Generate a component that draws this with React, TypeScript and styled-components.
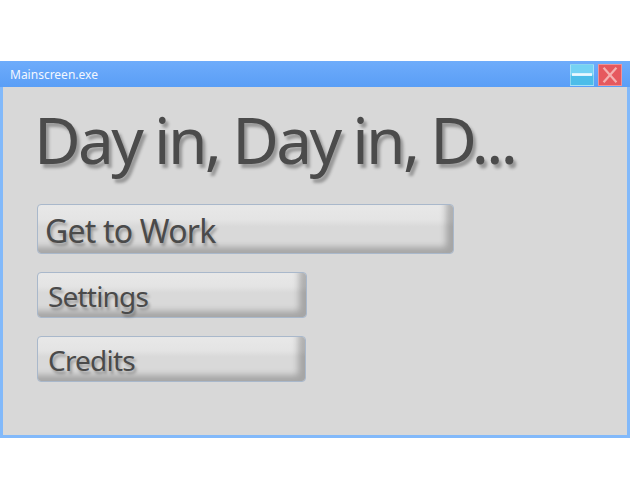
import React from "react"
import styled, { createGlobalStyle } from "styled-components"

const GlobalStyle = createGlobalStyle`
  html, body {
    margin: 0;
    padding: 0;
    background: #ffffff;
    font-family: "Noto Sans", "Open Sans", sans-serif;
  }
`

type MenuItem = {
  label: string
  big?: boolean
  width: number
}

const items: MenuItem[] = [
  { label: "Get to Work", big: true, width: 417 },
  { label: "Settings", width: 270 },
  { label: "Credits", width: 269 },
]

function App() {
  return (
    <>
      <GlobalStyle />
      <Page>
        <Window>
          <TitleBar>
            <Title>Mainscreen.exe</Title>
            <Controls>
              <MinimizeButton aria-label="minimize">
                <svg width="24" height="22" viewBox="0 0 24 22">
                  <rect x="1" y="9" width="22" height="3" fill="#eaf8ff" />
                </svg>
              </MinimizeButton>
              <CloseButton aria-label="close">
                <svg width="24" height="22" viewBox="0 0 24 22">
                  <path
                    d="M5 3 L19 19 M19 3 L5 19"
                    stroke="#f4b0b0"
                    strokeWidth="2.4"
                    fill="none"
                  />
                </svg>
              </CloseButton>
            </Controls>
          </TitleBar>

          <Body>
            <Heading>Day in, Day in, D...</Heading>
            <Menu>
              {items.map((item) => (
                <MenuButton key={item.label} $big={item.big} $width={item.width}>
                  {item.label}
                </MenuButton>
              ))}
            </Menu>
          </Body>
        </Window>
      </Page>
    </>
  )
}

export default App

const Page = styled.div`
  width: 630px;
  height: 500px;
  padding-top: 61px;
  box-sizing: border-box;
`

const Window = styled.div`
  width: 630px;
  height: 377px;
  box-sizing: border-box;
  border: 3px solid #82b9fa;
  border-top: none;
  background: #d8d8d8;
  display: flex;
  flex-direction: column;
`

const TitleBar = styled.div`
  height: 26px;
  margin: 0 -3px;
  padding: 0 8px 0 10px;
  background: linear-gradient(#6eacfb, #5a9ef6);
  display: flex;
  align-items: center;
  justify-content: space-between;
`

const Title = styled.span`
  color: #f2f7ff;
  font-size: 12px;
  padding-top: 1px;
`

const Controls = styled.div`
  display: flex;
  gap: 4px;
  padding-top: 2px;
`

const WindowButton = styled.button`
  width: 24px;
  height: 22px;
  padding: 0;
  border: 1px solid rgba(255, 255, 255, 0.35);
  display: flex;
  align-items: center;
  justify-content: center;
  svg {
    display: block;
  }
`

const MinimizeButton = styled(WindowButton)`
  background: linear-gradient(#74d2f4 0%, #74d2f4 45%, #4cbde9 55%, #4cbde9 100%);
`

const CloseButton = styled(WindowButton)`
  background: #e6585e;
`

const Body = styled.div`
  flex: 1;
  padding: 17px 0 0 34px;
`

const Heading = styled.h1`
  margin: 0 0 0 -3px;
  font-size: 64px;
  font-weight: 400;
  line-height: 72px;
  letter-spacing: -2.7px;
  word-spacing: -1px;
  color: #4b4b4b;
  text-shadow: 3px 4px 3px rgba(0, 0, 0, 0.3);
  white-space: nowrap;
`

const Menu = styled.div`
  margin-top: 28px;
  display: flex;
  flex-direction: column;
  gap: 18px;
`

const MenuButton = styled.button<{ $big?: boolean; $width: number }>`
  width: ${(props) => props.$width}px;
  height: ${(props) => (props.$big ? 50 : 46)}px;
  box-sizing: border-box;
  padding: ${(props) => (props.$big ? "3px 0 0 7px" : "1px 0 0 10px")};
  text-align: left;
  font-family: "Noto Sans", "Open Sans", sans-serif;
  font-size: ${(props) => (props.$big ? 32 : 28)}px;
  line-height: ${(props) => (props.$big ? 44 : 40)}px;
  letter-spacing: -0.8px;
  color: #4a4a4a;
  text-shadow: 2px 3px 3px rgba(0, 0, 0, 0.3);
  border: 1px solid #a9b8cb;
  border-radius: 4px;
  background: linear-gradient(#e8e8e8 0%, #e4e4e4 30%, #d9d9d9 45%, #d9d9d9 100%);
  box-shadow: inset -7px -6px 6px rgba(0, 0, 0, 0.24);
`
